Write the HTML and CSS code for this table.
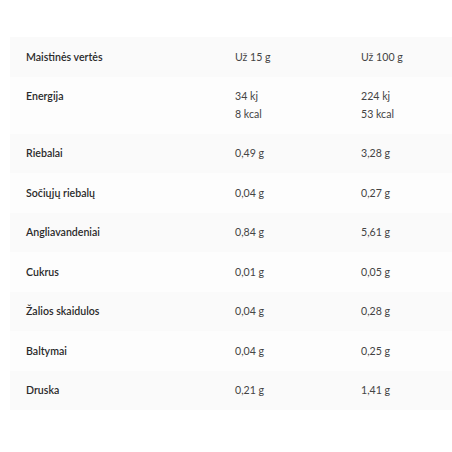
FILE: index.html
```html
<!DOCTYPE html>
<html lang="lt">
<head>
<meta charset="utf-8">
<link rel="stylesheet" href="styles.css">
</head>
<body>
<table class="nutrition">
  <colgroup><col class="c1"><col class="c2"><col class="c3"></colgroup>
  <tr class="odd"><th>Maistinės vertės</th><td>Už 15 g</td><td>Už 100 g</td></tr>
  <tr class="even"><th>Energija</th><td>34 kj<br>8 kcal</td><td>224 kj<br>53 kcal</td></tr>
  <tr class="odd"><th>Riebalai</th><td>0,49 g</td><td>3,28 g</td></tr>
  <tr class="even"><th>Sočiųjų riebalų</th><td>0,04 g</td><td>0,27 g</td></tr>
  <tr class="odd"><th>Angliavandeniai</th><td>0,84 g</td><td>5,61 g</td></tr>
  <tr class="even"><th>Cukrus</th><td>0,01 g</td><td>0,05 g</td></tr>
  <tr class="odd"><th>Žalios skaidulos</th><td>0,04 g</td><td>0,28 g</td></tr>
  <tr class="even"><th>Baltymai</th><td>0,04 g</td><td>0,25 g</td></tr>
  <tr class="odd"><th>Druska</th><td>0,21 g</td><td>1,41 g</td></tr>
</table>
</body>
</html>
```
FILE: styles.css
```css
html, body { margin: 0; padding: 0; background: #fff; overflow: hidden; }
body { padding: 37px 0 0 10px; }
.nutrition {
  border-collapse: collapse;
  table-layout: fixed;
  width: 442px;
  font-family: Lato, "Open Sans", sans-serif;
  font-size: 10.6px;
  line-height: 17.5px;
  color: #333;
}
.c1 { width: 209px; }
.c2 { width: 126px; }
.c3 { width: 107px; }
.nutrition th, .nutrition td {
  text-align: left;
  vertical-align: top;
  padding: 11.5px 0 10.5px 16px;
}
.nutrition th { font-weight: 600; color: #2a2a2a; }
.nutrition td { font-weight: 400; color: #444; }
.odd { background: #fafafa; }
.even { background: #fdfdfd; }
```
